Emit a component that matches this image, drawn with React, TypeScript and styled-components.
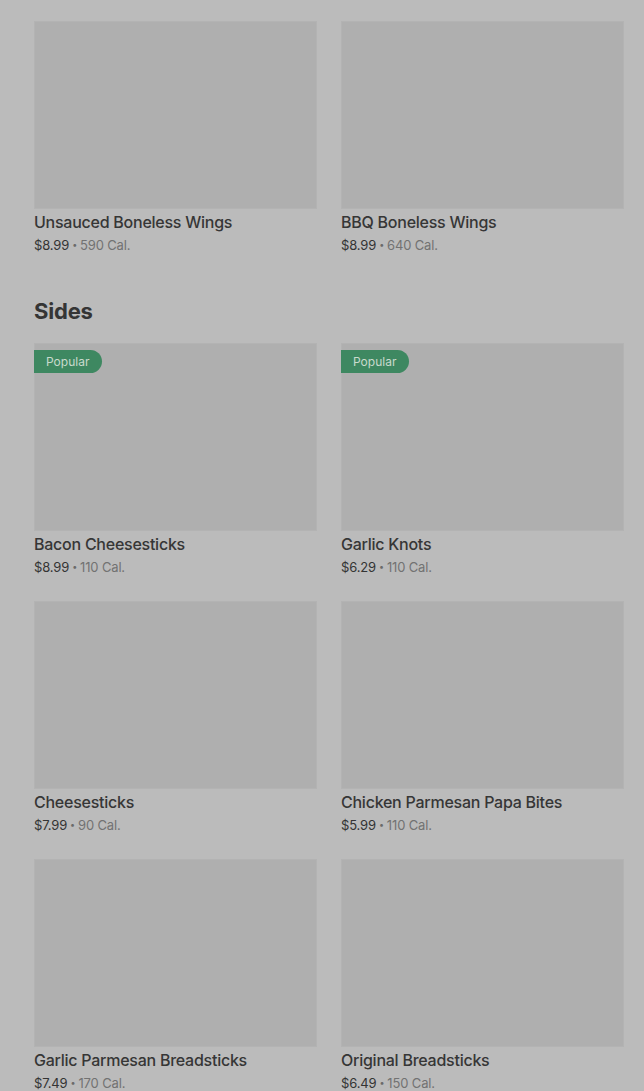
import React from 'react';
import styled, { createGlobalStyle } from 'styled-components';

interface MenuItem {
  name: string;
  price: string;
  cal: string;
  popular?: boolean;
}

const wings: MenuItem[] = [
  { name: 'Unsauced Boneless Wings', price: '$8.99', cal: '590 Cal.' },
  { name: 'BBQ Boneless Wings', price: '$8.99', cal: '640 Cal.' },
];

const sides: MenuItem[] = [
  { name: 'Bacon Cheesesticks', price: '$8.99', cal: '110 Cal.', popular: true },
  { name: 'Garlic Knots', price: '$6.29', cal: '110 Cal.', popular: true },
  { name: 'Cheesesticks', price: '$7.99', cal: '90 Cal.' },
  { name: 'Chicken Parmesan Papa Bites', price: '$5.99', cal: '110 Cal.' },
  { name: 'Garlic Parmesan Breadsticks', price: '$7.49', cal: '170 Cal.' },
  { name: 'Original Breadsticks', price: '$6.49', cal: '150 Cal.' },
];

const App: React.FC = () => {
  return (
    <>
      <GlobalStyle />
      <Page>
        <Grid>
          {wings.map((item) => (
            <Card key={item.name} item={item} />
          ))}
        </Grid>
        <SectionTitle>Sides</SectionTitle>
        <Grid>
          {sides.map((item) => (
            <Card key={item.name} item={item} />
          ))}
        </Grid>
      </Page>
    </>
  );
};

const Card: React.FC<{ item: MenuItem }> = ({ item }) => (
  <ItemCard>
    <ImageBox>{item.popular && <Badge>Popular</Badge>}</ImageBox>
    <ItemName>{item.name}</ItemName>
    <Meta>
      <Price>{item.price}</Price>
      <Dot>•</Dot>
      <Cal>{item.cal}</Cal>
    </Meta>
  </ItemCard>
);

// Styled components
const GlobalStyle = createGlobalStyle`
  body {
    margin: 0;
    background: #bbbbbb;
    font-family: Inter, "Noto Sans", sans-serif;
  }
`;

const Page = styled.div`
  padding: 21px 20px 0 34px;
  overflow: hidden;
  height: 1091px;
  box-sizing: border-box;
`;

const Grid = styled.div`
  display: grid;
  grid-template-columns: 283px 283px;
  column-gap: 24px;
  row-gap: 25px;
`;

const SectionTitle = styled.h2`
  margin: 43px 0 18px;
  font-size: 22px;
  line-height: 28px;
  font-weight: 700;
  color: #353535;
  letter-spacing: -0.2px;
`;

const ItemCard = styled.div`
  display: flex;
  flex-direction: column;
`;

const ImageBox = styled.div`
  position: relative;
  height: 188px;
  background: #afafaf;
  border: 1px solid #b3b3b3;
  box-sizing: border-box;
`;

const Badge = styled.span`
  position: absolute;
  top: 6px;
  left: -1px;
  height: 23px;
  padding: 0 13px 0 12px;
  display: flex;
  align-items: center;
  background: #3e8861;
  color: #c9dacd;
  font-size: 12px;
  border-radius: 0 12px 12px 0;
`;

const ItemName = styled.div`
  margin-top: 3px;
  font-size: 16px;
  line-height: 20px;
  font-weight: 500;
  letter-spacing: -0.25px;
  color: #363636;
`;

const Meta = styled.div`
  margin-top: 4px;
  display: flex;
  align-items: center;
  gap: 3px;
  font-size: 13px;
  line-height: 18px;
  letter-spacing: -0.15px;
`;

const Price = styled.span`
  color: #343434;
`;

const Dot = styled.span`
  color: #6a6a6a;
  font-size: 9px;
`;

const Cal = styled.span`
  color: #727272;
`;

export default App;
